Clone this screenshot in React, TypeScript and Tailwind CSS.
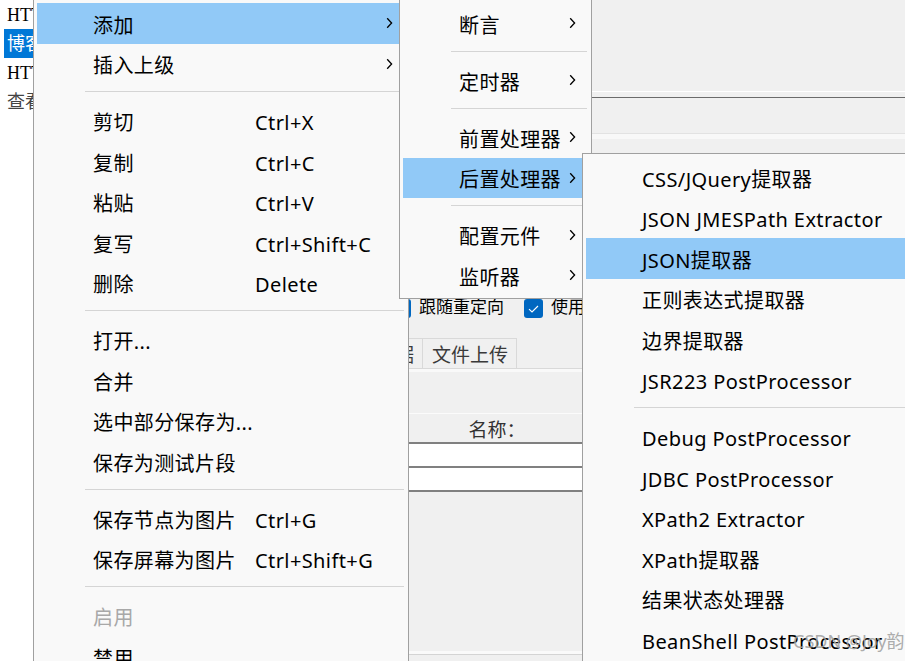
import React from 'react';

type Entry =
  | { kind: 'sep' }
  | {
      kind: 'item';
      label: string;
      shortcut?: string;
      sub?: boolean;
      active?: boolean;
      disabled?: boolean;
    };

type ItemOpts = { shortcut?: string; sub?: boolean; active?: boolean; disabled?: boolean };

const sep: Entry = { kind: 'sep' };
const item = (label: string, opts: ItemOpts = {}): Entry => ({ kind: 'item', label, ...opts });

const MAIN_MENU: Entry[] = [
  item('添加', { sub: true, active: true }),
  item('插入上级', { sub: true }),
  sep,
  item('剪切', { shortcut: 'Ctrl+X' }),
  item('复制', { shortcut: 'Ctrl+C' }),
  item('粘贴', { shortcut: 'Ctrl+V' }),
  item('复写', { shortcut: 'Ctrl+Shift+C' }),
  item('删除', { shortcut: 'Delete' }),
  sep,
  item('打开...'),
  item('合并'),
  item('选中部分保存为...'),
  item('保存为测试片段'),
  sep,
  item('保存节点为图片', { shortcut: 'Ctrl+G' }),
  item('保存屏幕为图片', { shortcut: 'Ctrl+Shift+G' }),
  sep,
  item('启用', { disabled: true }),
  item('禁用'),
];

const ADD_MENU: Entry[] = [
  item('断言', { sub: true }),
  sep,
  item('定时器', { sub: true }),
  sep,
  item('前置处理器', { sub: true }),
  item('后置处理器', { sub: true, active: true }),
  sep,
  item('配置元件', { sub: true }),
  item('监听器', { sub: true }),
];

const POST_MENU: Entry[] = [
  item('CSS/JQuery提取器'),
  item('JSON JMESPath Extractor'),
  item('JSON提取器', { active: true }),
  item('正则表达式提取器'),
  item('边界提取器'),
  item('JSR223 PostProcessor'),
  sep,
  item('Debug PostProcessor'),
  item('JDBC PostProcessor'),
  item('XPath2 Extractor'),
  item('XPath提取器'),
  item('结果状态处理器'),
  item('BeanShell PostProcessor'),
];

const TREE = ['HTTP请求', '博客园首页', 'HTTP请求', '查看结果树'];

const Chevron = () => (
  <svg
    width="7"
    height="11"
    viewBox="0 0 7 11"
    className="absolute right-[12px] top-1/2 -translate-y-1/2"
  >
    <path d="M1.2 0.8 L5.6 5.5 L1.2 10.2" fill="none" stroke="#000" strokeWidth="1.3" />
  </svg>
);

const Checkbox = () => (
  <span className="flex h-[19px] w-[19px] shrink-0 items-center justify-center rounded-[3px] bg-[#0067c0]">
    <svg width="11" height="8" viewBox="0 0 11 8">
      <path d="M1 4.2 L4 7 L10 1" fill="none" stroke="#fff" strokeWidth="1.1" />
    </svg>
  </span>
);

interface PopupMenuProps {
  entries: Entry[];
  className: string;
  labelClass?: string;
}

const PopupMenu = ({ entries, className, labelClass = '' }: PopupMenuProps) => (
  <div
    className={`absolute border border-[#a0a0a0] bg-[#f9f9f9] pt-[3px] pb-[2.5px] font-['Noto_Sans','Noto_Sans_CJK_SC',sans-serif] text-[20px] leading-none tracking-[0.4px] ${className}`}
  >
    {entries.map((e, i) =>
      e.kind === 'sep' ? (
        <div key={i} className="h-[16.5px] pt-[7px] pl-[51px] pr-[4px]">
          <div className="h-px bg-[#d5d5d5]" />
        </div>
      ) : (
        <div
          key={i}
          className={`relative mx-[3px] flex h-[40.5px] items-center whitespace-nowrap pl-[56px] pt-[5px] ${
            e.active ? 'bg-[#91c9f7]' : ''
          } ${e.disabled ? 'text-[#a8a8a8]' : 'text-black'}`}
        >
          <span className={labelClass}>{e.label}</span>
          {e.shortcut && <span>{e.shortcut}</span>}
          {e.sub && <Chevron />}
        </div>
      ),
    )}
  </div>
);

export default function App() {
  return (
    <div className="relative h-[661px] w-[905px] overflow-hidden bg-[#f0f0f0]">
      <div className="flex h-full">
        {/* test plan tree */}
        <div className="w-[300px] shrink-0 bg-white font-['Liberation_Serif','Noto_Sans_CJK_SC',serif] text-[18px] leading-none">
          {TREE.map((t, i) => (
            <div
              key={i}
              className={`ml-[4px] flex h-[29px] items-center whitespace-nowrap pl-[3px] ${
                i === 1 ? 'bg-[#0078d7] text-white' : i === 3 ? 'text-[#444]' : 'text-black'
              }`}
            >
              {t}
            </div>
          ))}
        </div>

        {/* HTTP request panel */}
        <div className="flex flex-1 flex-col bg-[#f0f0f0] font-['Noto_Sans_CJK_SC',sans-serif] leading-none">
          <div className="h-[91px] shrink-0" />
          <div className="h-px shrink-0 bg-white" />
          <div className="h-[5px] shrink-0" />
          <div className="h-px shrink-0 bg-[#6b6b6b]" />
          <div className="h-[35px] shrink-0" />
          <div className="h-px shrink-0 bg-[#e2e2e2]" />
          <div className="h-[5px] shrink-0 bg-[#f8f8f8]" />
          <div className="h-[160px] shrink-0" />

          <div className="flex h-[19px] shrink-0 items-center whitespace-nowrap pl-[92px] text-[17px] text-black">
            <Checkbox />
            <span className="relative -top-[3px] ml-[8px]">跟随重定向</span>
            <span className="ml-[20px]">
              <Checkbox />
            </span>
            <span className="relative -top-[3px] ml-[8px]">使用 KeepAlive</span>
          </div>

          <div className="h-[20px] shrink-0" />

          <div className="flex h-[30px] shrink-0 items-end pl-[9px] text-[19px] text-[#3a3a3a]">
            <div className="flex h-[30px] items-center border border-b-0 border-[#d9d9d9] pl-[9px] pr-[8px]">
              消息体数据
            </div>
            <div className="-ml-px flex h-[30px] items-center border border-b-0 border-[#d9d9d9] pl-[9px] pr-[8px]">
              文件上传
            </div>
          </div>
          <div className="h-[4px] shrink-0 border-t border-[#d9d9d9] bg-[#f9f9f9]" />
          <div className="h-[41px] shrink-0" />

          <div className="h-px shrink-0 bg-[#fbfbfb]" />
          <div className="flex h-[28px] shrink-0 items-center text-[19px] text-[#333]">
            <div className="w-[394px] text-center">名称：</div>
          </div>
          <div className="h-[2px] shrink-0 bg-[#808080]" />
          <div className="h-[22px] shrink-0 bg-white" />
          <div className="h-[2px] shrink-0 bg-[#808080]" />
          <div className="h-[22px] shrink-0 bg-white" />
          <div className="h-[2px] shrink-0 bg-[#808080]" />
          <div className="h-[159px] shrink-0" />
          <div className="h-[3px] shrink-0 bg-[#fafafa]" />
          <div className="h-px shrink-0 bg-[#d4d4d4]" />
          <div className="flex-1" />
        </div>
      </div>

      <PopupMenu entries={MAIN_MENU} className="left-[33px] top-[-1px] w-[376px]" labelClass="w-[162px]" />
      <PopupMenu entries={ADD_MENU} className="left-[399px] top-[-1px] w-[193px]" />
      <PopupMenu entries={POST_MENU} className="left-[582px] top-[153px] w-[340px]" />

      <div className="pointer-events-none absolute left-[793px] top-[632px] whitespace-nowrap font-['Noto_Sans','Noto_Sans_CJK_SC',sans-serif] text-[18px] leading-none text-[#a3a3a3]/90">
        CSDN @Joy韵
      </div>
    </div>
  );
}
